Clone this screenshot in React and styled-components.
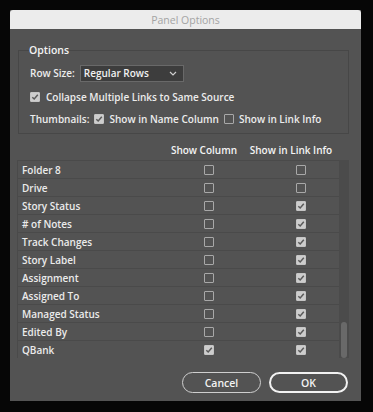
import React from "react";
import styled, { createGlobalStyle } from "styled-components";

const GlobalStyle = createGlobalStyle`
body{
margin:0;
background:#060606;
font-family:"Open Sans","Liberation Sans",sans-serif;
}
`

const rows = [
        { name: "Folder 8", col: false, info: false },
        { name: "Drive", col: false, info: false },
        { name: "Story Status", col: false, info: true },
        { name: "# of Notes", col: false, info: true },
        { name: "Track Changes", col: false, info: true },
        { name: "Story Label", col: false, info: true },
        { name: "Assignment", col: false, info: true },
        { name: "Assigned To", col: false, info: true },
        { name: "Managed Status", col: false, info: true },
        { name: "Edited By", col: false, info: true },
        { name: "QBank", col: true, info: true },
]

function Check({ on }) {
        return (
                <Box $on={on}>
                        {on && (
                                <svg width="8" height="8" viewBox="0 0 8 8">
                                        <path d="M1.3 4.2 L3.2 6 L6.8 1.8" fill="none" stroke="#5a5a5a" strokeWidth="1.5" />
                                </svg>
                        )}
                </Box>
        )
}

export default function App() {
        return (
                <Screen>
                        <GlobalStyle />
                        <Dialog>
                                <TitleBar>Panel Options</TitleBar>
                                <Group>
                                        <Legend>Options</Legend>
                                        <Line $h={18}>
                                                <span>Row Size:</span>
                                                <Select>
                                                        <span>Regular Rows</span>
                                                        <svg width="8" height="5" viewBox="0 0 8 5">
                                                                <path d="M1 1 L4 4 L7 1" fill="none" stroke="#cfcfcf" strokeWidth="1.2" />
                                                        </svg>
                                                </Select>
                                        </Line>
                                        <Line $gap={6} $top={7}>
                                                <Check on />
                                                <span>Collapse Multiple Links to Same Source</span>
                                        </Line>
                                        <Line $top={6}>
                                                <span>Thumbnails:</span>
                                                <Check on />
                                                <span>Show in Name Column</span>
                                                <Check />
                                                <span>Show in Link Info</span>
                                        </Line>
                                </Group>
                                <HeadRow>
                                        <HeadCell>Show Column</HeadCell>
                                        <HeadCell>Show in Link Info</HeadCell>
                                </HeadRow>
                                <Table>
                                        <List>
                                                {rows.map((r) => (
                                                        <Row key={r.name}>
                                                                <Name>{r.name}</Name>
                                                                <Cell><Check on={r.col} /></Cell>
                                                                <Cell $col={4}><Check on={r.info} /></Cell>
                                                        </Row>
                                                ))}
                                        </List>
                                        <Track>
                                                <Thumb />
                                        </Track>
                                </Table>
                                <Buttons>
                                        <Button>Cancel</Button>
                                        <Button $primary>OK</Button>
                                </Buttons>
                        </Dialog>
                </Screen>
        )
}

const Screen = styled.div`
padding:10px 0 0 10px;
height:412px;
box-sizing:border-box;
`

const Dialog = styled.div`
width:351px;
height:391px;
background:#535353;
color:#ececec;
font-size:10px;
font-weight:600;
white-space:nowrap;
display:flex;
flex-direction:column;
`

const TitleBar = styled.div`
height:19px;
flex-shrink:0;
background:#ececec;
color:#a4a4a4;
font-weight:400;
font-size:10.5px;
display:flex;
align-items:center;
justify-content:center;
border-radius:3px 3px 0 0;
`

const Group = styled.fieldset`
margin:14px 12px 0 8px;
padding:7px 0 6px 11px;
border:1px solid #474747;
display:flex;
flex-direction:column;
`

const Legend = styled.legend`
padding:0;
margin-left:-1px;
font-size:10.5px;
color:#f2f2f2;
`

const Line = styled.div`
display:flex;
align-items:center;
gap:${(p) => p.$gap || 5}px;
height:${(p) => p.$h || 16}px;
margin-top:${(p) => p.$top || 0}px;
`

const Select = styled.div`
width:104px;
height:17px;
box-sizing:border-box;
background:#3d3d3d;
border:1px solid #696969;
display:flex;
align-items:center;
justify-content:space-between;
padding:0 6px 0 3px;
color:#f0f0f0;
`

const Box = styled.span`
width:10px;
height:10px;
box-sizing:border-box;
border:1px solid ${(p) => (p.$on ? "#c4c4c4" : "#a8a8a8")};
background:${(p) => (p.$on ? "#cdcdcd" : "transparent")};
border-radius:1px;
display:inline-flex;
align-items:center;
justify-content:center;
flex-shrink:0;
`

const HeadRow = styled.div`
display:grid;
grid-template-columns:147px 80px 94px;
padding-left:7px;
margin-top:6px;
height:20px;
align-items:center;
color:#f4f4f4;
`

const HeadCell = styled.div`
text-align:center;
&:first-child{
grid-column:2;
}
`

const Table = styled.div`
margin:0 12px 0 7px;
display:flex;
height:198px;
flex-shrink:0;
border-left:1px solid #4a4a4a;
`

const List = styled.div`
flex:1;
display:flex;
flex-direction:column;
`

const Row = styled.div`
display:grid;
grid-template-columns:181px 20px 72px 20px 1fr;
height:18px;
box-sizing:border-box;
border-top:1px solid #4a4a4a;
align-items:center;
`

const Name = styled.div`
padding-left:4px;
color:#ebebeb;
`

const Cell = styled.div`
grid-column:${(p) => p.$col || 2};
display:flex;
justify-content:center;
`

const Track = styled.div`
width:10px;
background:#4b4b4b;
display:flex;
flex-direction:column;
justify-content:flex-end;
padding:0 2px 0 2px;
box-sizing:border-box;
`

const Thumb = styled.div`
height:36px;
background:#696969;
border-radius:3px;
`

const Buttons = styled.div`
display:flex;
justify-content:flex-end;
gap:8px;
margin:14px 13px 0 0;
`

const Button = styled.button`
width:79px;
height:21px;
border-radius:11px;
background:#535353;
border:${(p) => (p.$primary ? "2px solid #f2f2f2" : "1.5px solid #cfcfcf")};
color:#f2f2f2;
font-family:inherit;
font-size:10.5px;
font-weight:600;
padding:0;
`
